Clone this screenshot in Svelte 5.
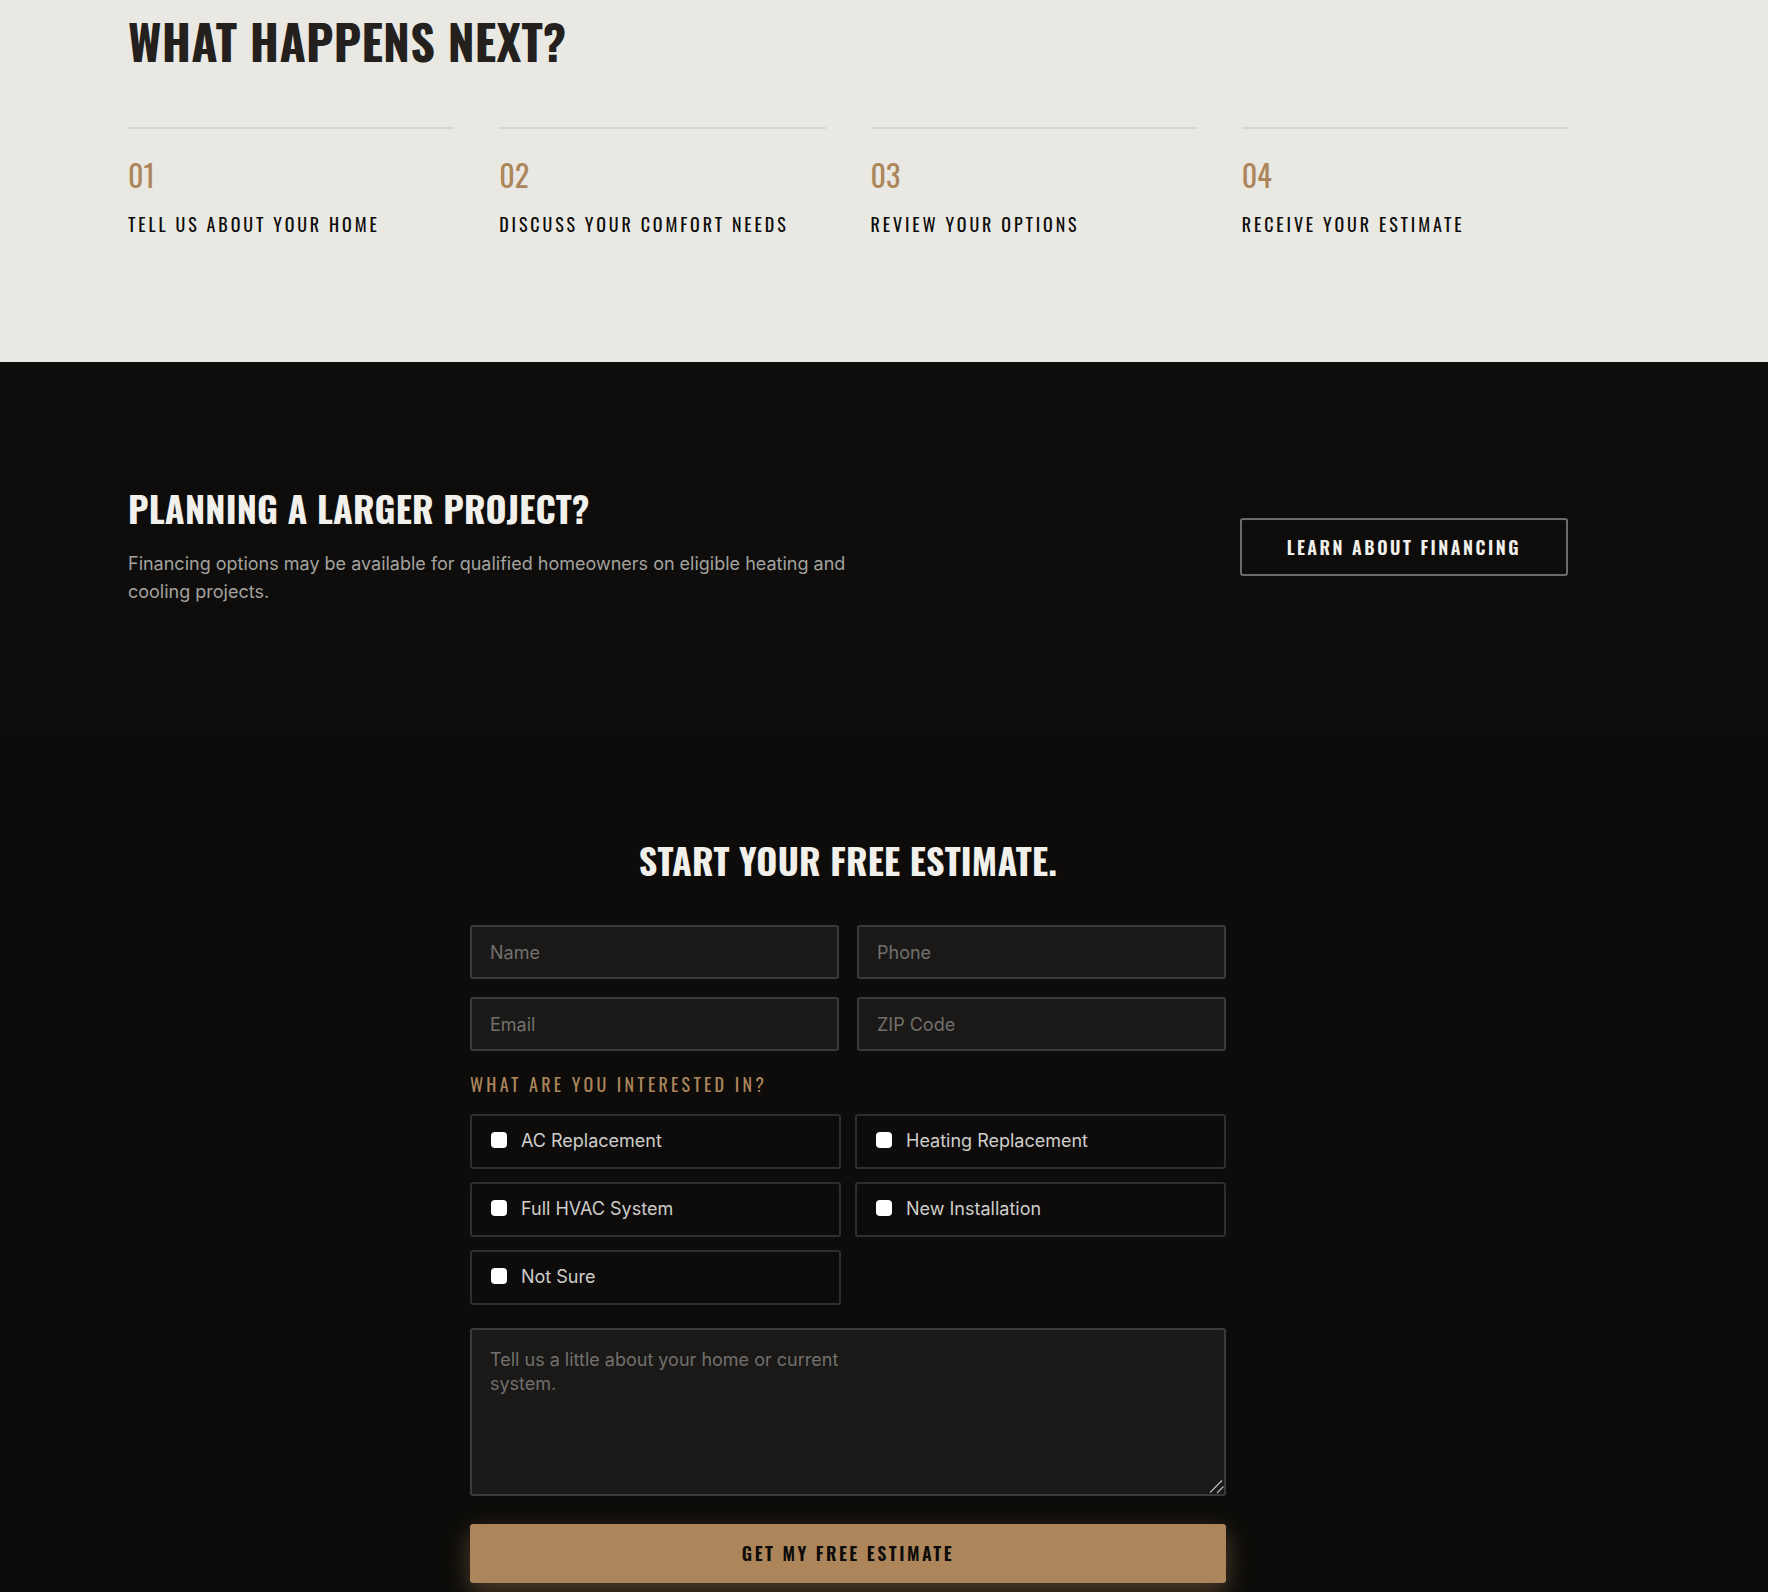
<script>
  const steps = [
    'Tell us about your home',
    'Discuss your comfort needs',
    'Review your options',
    'Receive your estimate'
  ];
  const fields = [
    { id: 'name', label: 'Name', type: 'text' },
    { id: 'phone', label: 'Phone', type: 'tel' },
    { id: 'email', label: 'Email', type: 'email' },
    { id: 'zip', label: 'ZIP Code', type: 'text' }
  ];
  const interests = [
    'AC Replacement',
    'Heating Replacement',
    'Full HVAC System',
    'New Installation',
    'Not Sure'
  ];
  const detailsHint = 'Tell us a little about your home or current\nsystem.';
</script>

<main>
  <section class="next">
    <div class="wrap">
      <h2>What happens next?</h2>
      <ol class="steps">
        {#each steps as step, i}
          <li>
            <span class="number">0{i + 1}</span>
            <span class="step">{step}</span>
          </li>
        {/each}
      </ol>
    </div>
  </section>

  <section class="financing">
    <div class="wrap split">
      <div class="pitch">
        <h3>Planning a larger project?</h3>
        <p>
          Financing options may be available for qualified homeowners on eligible heating and
          cooling projects.
        </p>
      </div>
      <a class="button outline" href="#financing">Learn about financing</a>
    </div>
  </section>

  <section class="estimate">
    <div class="wrap">
      <form onsubmit={(e) => e.preventDefault()}>
        <h3>Start your free estimate.</h3>
        <div class="fields">
          {#each fields as field}
            <input id={field.id} type={field.type} placeholder={field.label} aria-label={field.label} />
          {/each}
        </div>
        <fieldset>
          <legend>What are you interested in?</legend>
          <div class="options">
            {#each interests as interest}
              <label>
                <input type="checkbox" name="interest" value={interest} />
                <span>{interest}</span>
              </label>
            {/each}
          </div>
        </fieldset>
        <textarea placeholder={detailsHint} aria-label="About your home or current system"></textarea>
        <button class="button solid" type="submit">Get my free estimate</button>
      </form>
    </div>
  </section>
</main>

<style>
  :global(body) {
    margin: 0;
    background: #0d0c0a;
  }
  main {
    font: 18px/28px Inter, sans-serif;
    color: #f2f0eb;
  }
  main :global(*) {
    box-sizing: border-box;
  }
  section {
    padding-left: 128px;
    padding-right: 200px;
  }
  .wrap {
    max-width: 1440px;
    margin: 0 auto;
  }
  h2,
  h3,
  .number,
  .step,
  legend,
  .button {
    font-family: Oswald, 'Roboto Condensed', sans-serif;
    text-transform: uppercase;
  }
  h2,
  h3 {
    margin: 0;
    font-weight: 700;
    letter-spacing: 0.005em;
  }
  h2 {
    font-size: 48px;
    line-height: 54px;
    color: #23201d;
  }
  h3 {
    font-size: 36px;
    line-height: 42px;
  }

  .next {
    padding-top: 14px;
    padding-bottom: 125px;
    background: #e9e8e2;
    color: #0d0c0a;
  }
  .steps {
    display: grid;
    grid-template-columns: repeat(4, 1fr);
    gap: 45px;
    margin: 59px 0 0;
    padding: 0;
    list-style: none;
  }
  .steps li {
    display: flex;
    flex-direction: column;
    gap: 14px;
    padding-top: 24px;
    border-top: 2px solid #d7d6d0;
  }
  .number {
    font-size: 30px;
    line-height: 44px;
    color: #ac865a;
  }
  .step,
  legend {
    font-size: 18px;
    line-height: 26px;
    letter-spacing: 0.16em;
  }

  .financing {
    padding-top: 125px;
    padding-bottom: 125px;
    background: repeating-linear-gradient(#0d0c0a 0 4px, #0f0e0c 4px 6px, #0e0d0b 6px 9px);
  }
  .split {
    display: flex;
    align-items: center;
    justify-content: space-between;
    gap: 45px;
  }
  .pitch {
    max-width: 720px;
  }
  .pitch p {
    margin: 21px 0 0;
    color: #a3a29f;
  }
  .button {
    display: block;
    border-radius: 3px;
    font-size: 18px;
    line-height: 27px;
    font-weight: 600;
    letter-spacing: 0.14em;
    text-align: center;
    text-decoration: none;
    cursor: pointer;
  }
  .outline {
    flex: none;
    padding: 14px 45px 13px;
    border: 2px solid #6a6a68;
    color: #f2f0eb;
  }

  .estimate {
    padding-top: 108px;
    padding-bottom: 9px;
  }
  form {
    max-width: 756px;
    margin: 0 auto;
  }
  form h3 {
    text-align: center;
  }
  .fields {
    display: grid;
    grid-template-columns: 1fr 1fr;
    gap: 18px;
    margin-top: 44px;
  }
  .fields input,
  textarea {
    display: block;
    width: 100%;
    min-width: 0;
    margin: 0;
    padding: 14px 18px;
    border: 2px solid #3b3b39;
    border-radius: 3px;
    background: #1a1917;
    color: #f2f0eb;
    font: 18px/24px Inter, sans-serif;
  }
  .fields input {
    height: 54px;
  }
  .fields input::placeholder,
  textarea::placeholder {
    color: #71706d;
    opacity: 1;
  }
  fieldset {
    min-width: 0;
    margin: 20px 0 0;
    padding: 0;
    border: 0;
  }
  legend {
    padding: 0;
    letter-spacing: 0.18em;
    color: #ac865a;
  }
  .options {
    display: grid;
    grid-template-columns: 1fr 1fr;
    gap: 13px 14px;
    padding-top: 17px;
  }
  .options label {
    display: flex;
    align-items: center;
    gap: 14px;
    height: 55px;
    padding: 0 19px 1px;
    border: 2px solid #2f2f2d;
    border-radius: 3px;
    color: #cfcecb;
    cursor: pointer;
  }
  .options input {
    appearance: none;
    width: 16px;
    height: 16px;
    margin: 0 0 2px;
    border-radius: 4px;
    background: #fff;
  }
  .options input:checked {
    background: #ac865a;
  }
  textarea {
    height: 168px;
    margin-top: 23px;
    padding-top: 18px;
    resize: vertical;
  }
  textarea::-webkit-resizer {
    background: url("data:image/svg+xml,%3Csvg xmlns='http://www.w3.org/2000/svg' viewBox='0 0 15 15'%3E%3Cpath d='M1 13.5 13 1.5M8 14 14.5 7.5' stroke='%23b5b5b3' stroke-width='1.3'/%3E%3C/svg%3E")
      center / 100% 100% no-repeat;
  }
  .solid {
    width: 100%;
    margin-top: 28px;
    padding: 16px;
    border: 0;
    background: #ac865a;
    color: #0d0c0a;
    box-shadow: 0 9px 24px rgba(172, 134, 90, 0.42);
  }
</style>
